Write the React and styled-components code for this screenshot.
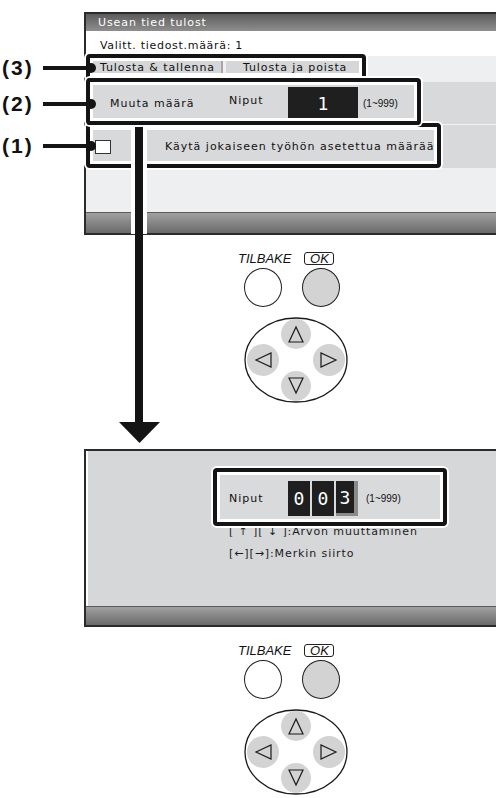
import React from 'react';
import styled, { createGlobalStyle } from 'styled-components';

const Global = createGlobalStyle`
  html, body { margin: 0; padding: 0; background: #fff; }
  body { font-family: "DejaVu Sans", "Liberation Sans", sans-serif; }
`;

const Page = styled.div`
  position: relative;
  width: 496px;
  height: 798px;
  overflow: hidden;
  background: #fff;
  padding-top: 12px;
  box-sizing: border-box;
`;

const Screen = styled.section`
  margin: ${p => p.$mt || 0}px 0 0 84px;
  border-left: 2px solid #2b2b2b;
  border-top: 2px solid #2b2b2b;
  border-bottom: 2px solid #2b2b2b;
  display: flex;
  flex-direction: column;
  background: ${p => p.$bg};
`;

const TitleBar = styled.div`
  height: 17px;
  background: linear-gradient(#5c5c5c, #8e8e8e);
  color: #fff;
  font-size: 11px;
  letter-spacing: 0.9px;
  display: flex;
  align-items: center;
  padding-left: 12px;
`;

const InfoRow = styled.div`
  height: 25px;
  box-sizing: border-box;
  padding: 3px 0 0 14px;
  background: #fff;
  display: flex;
  align-items: center;
  font-size: 11px;
  letter-spacing: 0.7px;
  color: #111;
`;

const TabRow = styled.div`
  height: 26px;
  box-sizing: border-box;
  padding: 4px 0 0 7px;
  display: flex;
  align-items: flex-start;
`;

const Tab = styled.div`
  height: 16px;
  width: ${p => p.$w}px;
  box-sizing: border-box;
  padding-left: ${p => p.$pl}px;
  background: #d5d6d8;
  font-size: 11px;
  letter-spacing: 0.9px;
  line-height: 16px;
  color: #111;
  ${p => p.$sep && 'border-right: 2px solid #a5a5a5; margin-right: 3px;'}
`;

const Band = styled.div`
  height: ${p => p.$h}px;
  background: #d8d9db;
  display: flex;
  align-items: center;
  ${p => p.$line && 'border-bottom: 1px solid #f2f2f2;'}
`;

const UiText = styled.span`
  font-size: 11px;
  letter-spacing: 1px;
  color: #111;
  white-space: nowrap;
  width: ${p => (p.$w ? `${p.$w}px` : 'auto')};
  margin-left: ${p => p.$ml || 0}px;
  ${p => p.$up && 'transform: translateY(-3px);'}
  flex: none;
`;

const ValueBox = styled.div`
  width: 70px;
  height: 32px;
  background: #1f1f1f;
  color: #fff;
  font-family: "DejaVu Sans Mono", monospace;
  font-size: 18px;
  display: flex;
  align-items: center;
  justify-content: center;
  flex: none;
`;

const Range = styled.span`
  font-family: "Liberation Sans", sans-serif;
  font-size: 10px;
  color: #111;
  margin-left: ${p => p.$ml}px;
  flex: none;
`;

const CheckBox = styled.div`
  width: 16px;
  height: 14px;
  box-sizing: border-box;
  background: #fff;
  border: 1px solid #333;
  margin-left: 9px;
  flex: none;
`;

const ClipText = styled.span`
  font-size: 11px;
  letter-spacing: 1px;
  color: #111;
  white-space: nowrap;
  overflow: hidden;
  margin-left: 54px;
  width: 270px;
  flex: none;
`;

const Fill = styled.div`
  height: ${p => p.$h}px;
  ${p => p.$edge && 'box-shadow: inset 2px 0 0 #fff;'}
`;

const BottomBar = styled.div`
  height: ${p => p.$h}px;
  border-top: 1px solid #5c5c5c;
  background: linear-gradient(#a0a0a0, #6a6a6a);
`;

const PanelRow = styled.div`
  margin: 26px 0 0 130px;
  width: 227px;
  height: 42px;
  box-sizing: border-box;
  background: #d9dadc;
  display: flex;
  align-items: center;
  padding-left: 13px;
`;

const Digit = styled.div`
  width: 22px;
  height: 35px;
  box-sizing: border-box;
  background: #1f1f1f;
  color: #fff;
  font-family: "DejaVu Sans Mono", monospace;
  font-size: 18px;
  display: flex;
  align-items: center;
  justify-content: center;
  margin-right: 2px;
  flex: none;
  ${p => p.$cursor && 'border-right: 4px solid #8a8a8a; border-bottom: 3px solid #8a8a8a; margin-top: 1px;'}
`;

const HelpBlock = styled.div`
  margin: 2px 0 0 143px;
`;

const HelpLine = styled.div`
  font-size: 11px;
  letter-spacing: 0.9px;
  line-height: 22px;
  color: #1a1a1a;
  white-space: nowrap;
`;

const Controls = styled.div`
  margin: 17px 0 0 236px;
  width: 116px;
  display: flex;
  flex-direction: column;
`;

const LabelRow = styled.div`
  display: flex;
  align-items: center;
  height: 13px;
  padding-left: 2px;
  gap: 13px;
`;

const BackLabel = styled.span`
  font-family: "Liberation Sans", Arial, sans-serif;
  font-style: italic;
  font-size: 13px;
  color: #111;
  line-height: 13px;
`;

const OkLabel = styled.span`
  font-family: "Liberation Sans", Arial, sans-serif;
  font-style: italic;
  font-size: 13px;
  color: #111;
  width: 30px;
  height: 13px;
  box-sizing: border-box;
  border: 1px solid #222;
  border-radius: 3px;
  display: flex;
  align-items: center;
  justify-content: center;
`;

const ButtonRow = styled.div`
  display: flex;
  margin-top: 3px;
  padding-left: 8px;
  gap: 20px;
`;

const RoundButton = styled.div`
  width: 38px;
  height: 39px;
  box-sizing: border-box;
  border-radius: 50%;
  border: 1.3px solid #222;
  background: ${p => (p.$filled ? '#d3d3d3' : '#fff')};
`;

const PadSvg = styled.svg`
  display: block;
  margin: 10px 0 0 8px;
`;

const Callout = styled.div`
  position: absolute;
  left: ${p => p.$x}px;
  top: ${p => p.$y}px;
  width: ${p => p.$w}px;
  height: ${p => p.$h}px;
  box-sizing: border-box;
  border: 4px solid #141414;
  border-radius: 4px;
  box-shadow: 0 0 0 2px #fff, inset 0 0 0 3px #fff;
  pointer-events: none;
`;

const Marker = styled.div`
  position: absolute;
  left: 0;
  top: ${p => p.$y - 12}px;
  height: 24px;
  display: flex;
  align-items: center;
`;

const MarkerLabel = styled.span`
  width: 41px;
  padding-left: 2px;
  font-family: "Liberation Sans", Arial, sans-serif;
  font-weight: bold;
  font-size: 21px;
  letter-spacing: 2px;
  color: #111;
`;

const MarkerLine = styled.span`
  width: 45px;
  height: 4px;
  background: #141414;
`;

const MarkerDot = styled.span`
  width: 10px;
  height: 10px;
  border-radius: 50%;
  background: #141414;
  margin-left: -2px;
`;

const ArrowSvg = styled.svg`
  position: absolute;
  left: 119px;
  top: 127px;
`;

function DPad() {
  return (
    <PadSvg width="104" height="86" viewBox="0 0 104 86">
      <defs>
        <clipPath id="padclip">
          <ellipse cx="52" cy="43" rx="51" ry="42" />
        </clipPath>
      </defs>
      <ellipse cx="52" cy="43" rx="51" ry="42" fill="#fff" />
      <g clipPath="url(#padclip)" fill="#d3d3d3">
        <circle cx="52" cy="17" r="15" />
        <circle cx="52" cy="69" r="15" />
        <circle cx="19" cy="43" r="16" />
        <circle cx="85" cy="43" r="16" />
      </g>
      <ellipse cx="52" cy="43" rx="51" ry="42" fill="none" stroke="#1a1a1a" strokeWidth="1.3" />
      <g fill="none" stroke="#1a1a1a" strokeWidth="1.2" strokeLinejoin="miter">
        <polygon points="52,10 45,25 59,25" />
        <polygon points="52,76 45,61 59,61" />
        <polygon points="12,43 27,36 27,50" />
        <polygon points="92,43 77,36 77,50" />
      </g>
    </PadSvg>
  );
}

function ControlPanel() {
  return (
    <Controls>
      <LabelRow>
        <BackLabel>TILBAKE</BackLabel>
        <OkLabel>OK</OkLabel>
      </LabelRow>
      <ButtonRow>
        <RoundButton />
        <RoundButton $filled />
      </ButtonRow>
      <DPad />
    </Controls>
  );
}

function Mark({ y, label }) {
  return (
    <Marker $y={y}>
      <MarkerLabel>{label}</MarkerLabel>
      <MarkerLine />
      <MarkerDot />
    </Marker>
  );
}

export default function App() {
  return (
    <Page>
      <Global />
      <Screen $bg="#eeeff0">
        <TitleBar>Usean tied tulost</TitleBar>
        <InfoRow>Valitt. tiedost.määrä: 1</InfoRow>
        <TabRow>
          <Tab $w={130} $pl={7} $sep>Tulosta &amp; tallenna</Tab>
          <Tab $w={133} $pl={17}>Tulosta ja poista</Tab>
        </TabRow>
        <Band $h={42} $line>
          <UiText $ml={24} $w={119}>Muuta määrä</UiText>
          <UiText $w={59} $up>Niput</UiText>
          <ValueBox>1</ValueBox>
          <Range $ml={5}>(1~999)</Range>
        </Band>
        <Band $h={43}>
          <CheckBox />
          <ClipText>Käytä jokaiseen työhön asetettua määrää</ClipText>
        </Band>
        <Fill $h={44} />
        <BottomBar $h={20} />
      </Screen>

      <ControlPanel />

      <Screen $mt={46} $bg="#d6d7d9">
        <Fill $h={155} $edge>
          <PanelRow>
            <UiText $w={59}>Niput</UiText>
            <Digit>0</Digit>
            <Digit>0</Digit>
            <Digit $cursor>3</Digit>
            <Range $ml={6}>(1~999)</Range>
          </PanelRow>
          <HelpBlock>
            <HelpLine>[ ↑ ][ ↓ ]:Arvon muuttaminen</HelpLine>
            <HelpLine>[←][→]:Merkin siirto</HelpLine>
          </HelpBlock>
        </Fill>
        <BottomBar $h={18} />
      </Screen>

      <ControlPanel />

      <Callout $x={86} $y={54} $w={280} $h={26} />
      <Callout $x={86} $y={123} $w={355} $h={45} />
      <ArrowSvg width="42" height="317" viewBox="0 0 42 317">
        <rect x="12" y="0" width="16" height="107" fill="#fff" />
        <rect x="16" y="0" width="8" height="296" fill="#141414" />
        <polygon points="0,295 41,295 20.5,316" fill="#141414" />
      </ArrowSvg>
      <Callout $x={86} $y={78} $w={335} $h={47} />
      <Callout $x={213} $y={468} $w={234} $h={58} />

      <Mark y={68} label="(3)" />
      <Mark y={104} label="(2)" />
      <Mark y={146} label="(1)" />
    </Page>
  );
}
